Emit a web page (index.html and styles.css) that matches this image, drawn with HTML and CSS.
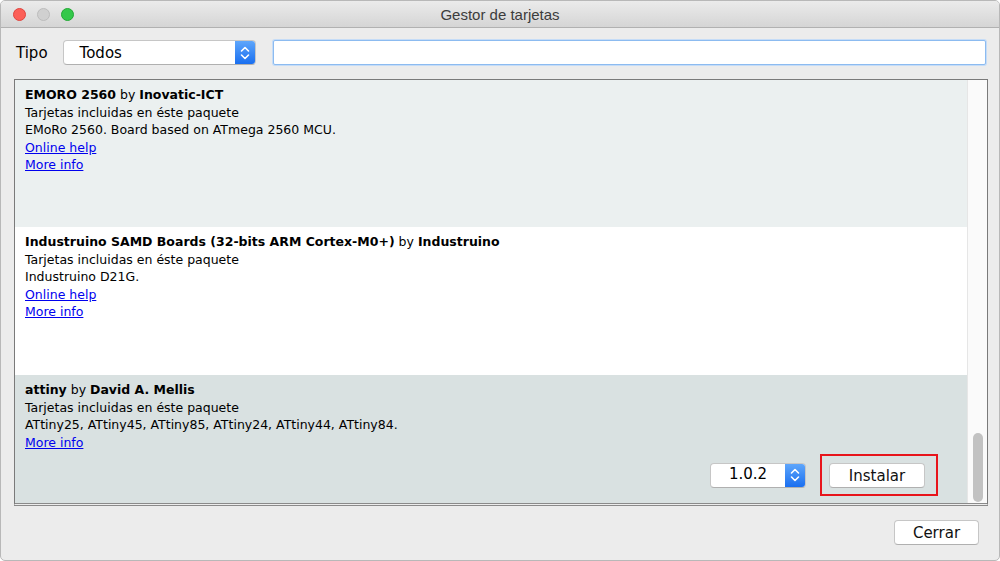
FILE: index.html
```html
<!DOCTYPE html>
<html lang="es">
<head>
    <meta charset="UTF-8">
    <title>Gestor de tarjetas</title>
    <link rel="stylesheet" href="styles.css">
</head>
<body>
<div class="window">
    <div class="titlebar">
        <div class="lights">
            <span class="light red"></span>
            <span class="light gray"></span>
            <span class="light green"></span>
        </div>
        <div class="title">Gestor de tarjetas</div>
    </div>

    <div class="toolbar">
        <label class="tipo">Tipo</label>
        <div class="popup tipo-select">
            <span class="popup-text">Todos</span>
            <span class="stepper">
                <svg width="10" height="16" viewBox="0 0 10 16"><path d="M1.5 6 L5 2.5 L8.5 6 M1.5 10 L5 13.5 L8.5 10" fill="none" stroke="#fff" stroke-width="1.6" stroke-linecap="round" stroke-linejoin="round"/></svg>
            </span>
        </div>
        <div class="search"></div>
    </div>

    <div class="list">
        <div class="items">
            <div class="item light-row">
                <div><b>EMORO 2560</b> by <b>Inovatic-ICT</b></div>
                <div>Tarjetas incluidas en éste paquete</div>
                <div>EMoRo 2560. Board based on ATmega 2560 MCU.</div>
                <div><a href="#">Online help</a></div>
                <div><a href="#">More info</a></div>
            </div>
            <div class="item white-row">
                <div><b>Industruino SAMD Boards (32-bits ARM Cortex-M0+)</b> by <b>Industruino</b></div>
                <div>Tarjetas incluidas en éste paquete</div>
                <div>Industruino D21G.</div>
                <div><a href="#">Online help</a></div>
                <div><a href="#">More info</a></div>
            </div>
            <div class="item selected-row">
                <div><b>attiny</b> by <b>David A. Mellis</b></div>
                <div>Tarjetas incluidas en éste paquete</div>
                <div>ATtiny25, ATtiny45, ATtiny85, ATtiny24, ATtiny44, ATtiny84.</div>
                <div><a href="#">More info</a></div>
                <div class="actions">
                    <div class="popup version-select">
                        <span class="popup-text">1.0.2</span>
                        <span class="stepper">
                            <svg width="10" height="16" viewBox="0 0 10 16"><path d="M1.5 6 L5 2.5 L8.5 6 M1.5 10 L5 13.5 L8.5 10" fill="none" stroke="#fff" stroke-width="1.6" stroke-linecap="round" stroke-linejoin="round"/></svg>
                        </span>
                    </div>
                    <div class="highlight">
                        <button class="btn">Instalar</button>
                    </div>
                </div>
            </div>
        </div>
        <div class="scrollbar">
            <div class="thumb"></div>
        </div>
    </div>

    <div class="footer">
        <button class="btn cerrar">Cerrar</button>
    </div>
</div>
</body>
</html>
```

FILE: styles.css
```css
body {
    margin: 0;
    background: #ffffff;
    font-family: "DejaVu Sans", "Liberation Sans", sans-serif;
    font-size: 12.5px;
    color: #000;
}
.window {
    width: 998px;
    height: 559px;
    border: 1px solid #b8b8b8;
    border-radius: 5px;
    background: #ececec;
    display: flex;
    flex-direction: column;
    overflow: hidden;
}
.titlebar {
    height: 26px;
    flex: none;
    display: flex;
    align-items: center;
    position: relative;
    background: linear-gradient(#ebebeb, #d5d5d5);
    border-bottom: 1px solid #b1b1b1;
}
.lights {
    display: flex;
    gap: 11px;
    padding-left: 12px;
}
.light {
    width: 13px;
    height: 13px;
    border-radius: 50%;
    box-sizing: border-box;
}
.light.red {
    background: #fc5f57;
    border: 1px solid #e0443e;
}
.light.gray {
    background: #d0d0d0;
    border: 1px solid #bcbcbc;
}
.light.green {
    background: #34c84a;
    border: 1px solid #21a934;
}
.title {
    position: absolute;
    left: 0;
    right: 0;
    text-align: center;
    font-family: "Liberation Sans", Arial, sans-serif;
    font-size: 15px;
    color: #3c3c3c;
}
.toolbar {
    display: flex;
    align-items: center;
    padding: 12px 13px 0 15px;
    height: 25px;
    flex: none;
}
.tipo {
    font-size: 15px;
    margin-right: 15px;
}
.popup {
    display: flex;
    align-items: stretch;
    height: 25px;
    box-sizing: border-box;
    background: #fff;
    border: 1px solid #c6c6c6;
    border-bottom-color: #b0b0b0;
    border-radius: 4px;
    overflow: hidden;
}
.popup-text {
    flex: 1;
    display: flex;
    align-items: center;
}
.tipo-select {
    width: 193px;
}
.tipo-select .popup-text {
    padding-left: 16px;
    font-size: 15px;
}
.stepper {
    width: 20px;
    background: linear-gradient(#5ea6fb, #1a6ff0);
    display: flex;
    align-items: center;
    justify-content: center;
}
.search {
    flex: 1;
    margin-left: 17px;
    height: 25px;
    box-sizing: border-box;
    background: #fff;
    border: 1px solid #8cbbf0;
    box-shadow: 0 0 0 1px #c5dcf7;
    border-radius: 2px;
}
.list {
    margin: 14px 11px 0 13px;
    height: 427px;
    flex: none;
    display: flex;
    border: 1px solid #7a7a7a;
    border-bottom: 3px double #8a8a8a;
    box-sizing: border-box;
    overflow: hidden;
}
.items {
    flex: 1;
    display: flex;
    flex-direction: column;
}
.item {
    padding: 6px 9px 0 10px;
    line-height: 17.5px;
    height: 147px;
    box-sizing: border-box;
    flex: none;
}
.light-row {
    background: #ebf0f0;
}
.white-row {
    background: #ffffff;
    height: 148px;
}
.selected-row {
    background: #d9e1e1;
    flex: 1;
}
a {
    color: #0000ee;
}
.actions {
    display: flex;
    justify-content: flex-end;
    align-items: center;
    gap: 14px;
    margin-top: 3px;
    padding-right: 20px;
}
.version-select {
    width: 96px;
}
.version-select .popup-text {
    justify-content: center;
    font-size: 15px;
}
.highlight {
    border: 2px solid #e8141b;
    padding: 7px 11px 6px 7px;
}
.btn {
    font-family: "DejaVu Sans", "Liberation Sans", sans-serif;
    font-size: 15px;
    background: #fff;
    border: 1px solid #c6c6c6;
    border-bottom-color: #b0b0b0;
    border-radius: 4px;
    height: 25px;
    width: 96px;
    padding: 0;
    color: #111;
}
.scrollbar {
    width: 19px;
    flex: none;
    background: #fafafa;
    border-left: 1px solid #e6e6e6;
    display: flex;
    flex-direction: column;
    justify-content: flex-end;
    align-items: center;
    padding-bottom: 1px;
}
.thumb {
    width: 10px;
    height: 69px;
    border-radius: 5px;
    background: #c2c2c2;
}
.footer {
    display: flex;
    justify-content: flex-end;
    padding: 14px 20px 0 0;
}
.cerrar {
    width: 85px;
}
```
